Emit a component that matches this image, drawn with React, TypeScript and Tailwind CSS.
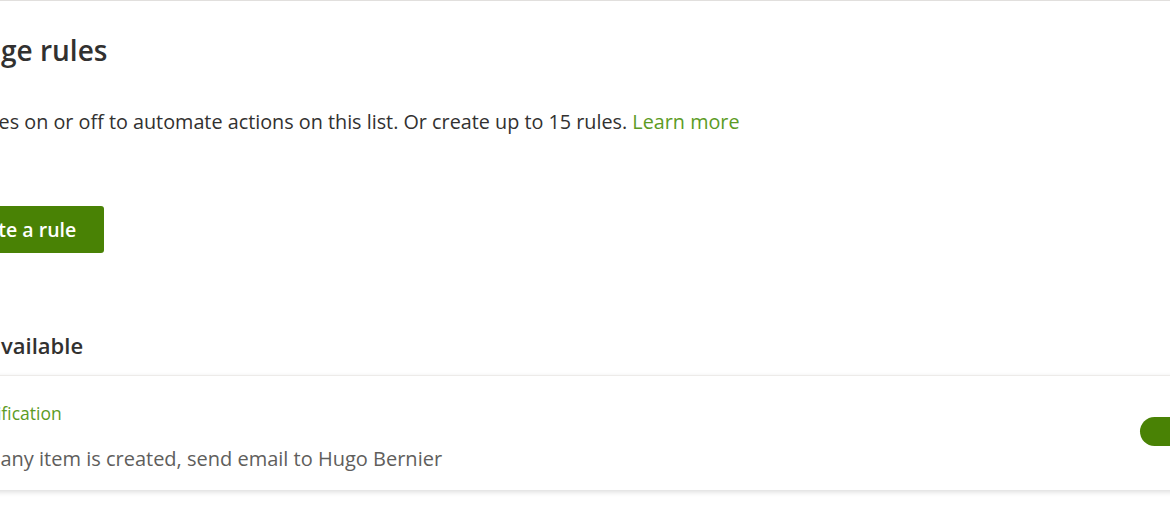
import React from 'react';

const font = { fontFamily: '"Segoe UI", "Open Sans", "Noto Sans", sans-serif' };

const rules = [
  {
    id: 'new-item',
    title: 'Notification',
    description: 'When any item is created, send email to Hugo Bernier',
    enabled: true,
  },
];

export default function App() {
  return (
    <div className="w-[1170px] h-[508px] overflow-hidden bg-white border-t border-[#e1dfdd]" style={font}>
      <div className="-ml-[75px] w-[1320px]">
        {/* Header */}
        <h1 className="mt-[29px] text-[28px] leading-[40px] font-semibold text-[#323130]">Manage rules</h1>
        <p className="mt-[38px] text-[19.8px] leading-[28px] text-[#323130]">
          Turn rules on or off to automate actions on this list. Or create up to 15 rules.{' '}
          <a className="text-[#5c9b25]">Learn more</a>
        </p>

        <button className="mt-[70px] h-[47px] pl-[30px] pr-[28px] rounded-[3px] bg-[#498205] text-white text-[19.5px] font-semibold">
          Create a rule
        </button>

        {/* Rules list */}
        <h2 className="mt-[77px] text-[22px] leading-[30px] font-semibold text-[#323130]">Rules available</h2>
        <div className="mt-[15px]">
          {rules.map((rule) => (
            <div
              key={rule.id}
              className="flex items-start justify-between border-t border-[#edebe9] bg-white pl-[16px] pr-[45px] pt-[25px] pb-[17px] shadow-[0_2px_5px_rgba(0,0,0,0.14)]"
            >
              <div>
                <div className="ml-[26px] text-[17.5px] leading-[24px] text-[#5c9b25]">{rule.title}</div>
                <div className="mt-[20px] text-[20px] leading-[28px] text-[#605e5c]">{rule.description}</div>
              </div>
              <div className="mt-[16px] w-[60px] h-[29px] rounded-full bg-[#498205] relative">
                <span className="absolute right-[7px] top-[7px] w-[15px] h-[15px] rounded-full bg-white" />
              </div>
            </div>
          ))}
        </div>
      </div>
    </div>
  );
}
